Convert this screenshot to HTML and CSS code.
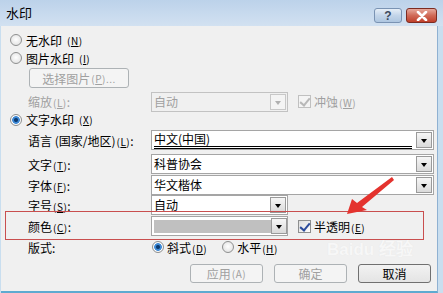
FILE: index.html
```html
<!DOCTYPE html>
<html lang="zh-CN">
<head>
    <meta charset="UTF-8" />
    <title>水印</title>
    <link rel="stylesheet" href="styles.css">
</head>
<body>
<div class="window">
    <div class="titlebar">
        <span class="title">水印</span>
        <div class="caption-btns">
            <span class="cap help">?</span>
            <span class="cap close">
                <svg width="14" height="10" viewBox="0 0 14 10"><path d="M3 1 L11 9 M11 1 L3 9" stroke="#fff" stroke-width="2.6" stroke-linecap="round"/></svg>
            </span>
        </div>
    </div>
    <div class="client">
        <div class="opt first"><span class="radio"></span>无水印<span class="key">(<u>N</u>)</span></div>
        <div class="opt"><span class="radio"></span>图片水印<span class="key">(<u>I</u>)</span></div>
        <div class="pick-row"><span class="btn pick disabled">选择图片<span class="key">(<u>P</u>)...</span></span></div>
        <div class="field scale disabled">
            <span class="lbl">缩放<span class="key">(<u>L</u>)</span>:</span>
            <span class="combo short off"><span class="val">自动</span><span class="drop"></span></span>
            <span class="check off"></span><span class="check-text">冲蚀<span class="key">(<u>W</u>)</span></span>
        </div>
        <div class="opt text-opt"><span class="radio on"></span>文字水印<span class="key">(<u>X</u>)</span></div>
        <div class="field lang">
            <span class="lbl">语言 (国家/地区)<span class="key">(<u>L</u>)</span>:</span>
            <span class="combo long"><span class="val underlined">中文(中国)</span><span class="drop"></span></span>
        </div>
        <div class="field gap4">
            <span class="lbl">文字<span class="key">(<u>T</u>)</span>:</span>
            <span class="combo long"><span class="val">科普协会</span><span class="drop"></span></span>
        </div>
        <div class="field gap1">
            <span class="lbl">字体<span class="key">(<u>F</u>)</span>:</span>
            <span class="combo long"><span class="val">华文楷体</span><span class="drop"></span></span>
        </div>
        <div class="field">
            <span class="lbl">字号<span class="key">(<u>S</u>)</span>:</span>
            <span class="combo short"><span class="val">自动</span><span class="drop"></span></span>
        </div>
        <div class="field gap1">
            <span class="lbl">颜色<span class="key">(<u>C</u>)</span>:</span>
            <span class="combo short"><span class="val"><span class="swatch"></span></span><span class="drop"></span></span>
            <span class="check on"></span><span class="check-text">半透明<span class="key">(<u>E</u>)</span></span>
        </div>
        <div class="field layout">
            <span class="lbl">版式:</span>
            <span class="radio on"></span><span class="radio-text">斜式<span class="key">(<u>D</u>)</span></span>
            <span class="radio"></span><span class="radio-text">水平<span class="key">(<u>H</u>)</span></span>
        </div>
        <div class="actions">
            <span class="btn disabled">应用<span class="key">(A)</span></span>
            <span class="btn disabled">确定</span>
            <span class="btn default">取消</span>
        </div>

        <div class="watermark">Bai<b>du</b> 经验</div>
        <div class="highlight"></div>
        <svg class="arrow" width="443" height="293" viewBox="0 0 443 293">
            <polygon points="347,214 352,199 357,203 392,177 394,180 362,207 367,210" fill="#e4332e"/>
        </svg>
    </div>
</div>
</body>
</html>
```

FILE: styles.css
```css
* {
    box-sizing: border-box;
}
body {
    margin: 0;
    width: 443px;
    height: 293px;
    overflow: hidden;
    font-family: "Noto Sans CJK SC", "Liberation Sans", sans-serif;
    font-size: 12px;
    color: #000;
}
.window {
    width: 443px;
    height: 293px;
    display: flex;
    flex-direction: column;
    background: #c9deef;
}
.titlebar {
    height: 26px;
    display: flex;
    justify-content: space-between;
    padding: 0 6px 0 6px;
    background: linear-gradient(#bcd2ea, #d2e1f1);
}
.title {
    font-size: 13px;
    line-height: 26px;
}
.caption-btns {
    display: flex;
    gap: 4px;
    padding-top: 8px;
}
.cap {
    height: 15px;
    border-radius: 3px;
    display: flex;
    align-items: center;
    justify-content: center;
}
.help {
    width: 28px;
    border: 1px solid #7a93b3;
    background: linear-gradient(#e6eef7, #c3d5e9 50%, #aec6e0);
    color: #3c4a5e;
    font-family: "Liberation Sans", sans-serif;
    font-weight: bold;
    font-size: 12px;
}
.close {
    width: 31px;
    border: 1px solid #7c2c22;
    background: linear-gradient(#e7a99c, #d06a57 50%, #c0402b);
}
.client {
    position: relative;
    flex: 1;
    margin: 0 5px 0 1px;
    background: #f0f0f0;
    border-right: 1px solid #8fb1d2;
    border-bottom: 2px solid #5eaad0;
    padding-left: 9px;
}
.key {
    font-size: 10px;
    margin-left: 1px;
    letter-spacing: 0.5px;
}
.opt {
    height: 18px;
    display: flex;
    align-items: center;
    gap: 4px;
}
.opt.first {
    margin-top: 5px;
}
.text-opt {
    height: 17px;
}
.radio {
    width: 12px;
    height: 12px;
    border-radius: 50%;
    border: 1px solid #8e8f8f;
    background: radial-gradient(circle at 50% 45%, #ffffff, #dcdcdc);
    flex: none;
}
.radio.on {
    background: radial-gradient(circle, #0b3a70 0 1.5px, #3f8ad6 2.5px 3.5px, #fff 4.2px, #dcdcdc);
}
.pick-row {
    margin: 1px 0 0 19px;
    height: 20px;
}
.btn {
    display: inline-flex;
    align-items: center;
    justify-content: center;
    height: 20px;
    border-radius: 3px;
    border: 1px solid #adb2b5;
    background: #f4f4f4;
}
.btn.disabled {
    color: #a0a0a0;
}
.pick {
    width: 100px;
}
.field {
    display: flex;
    align-items: center;
    height: 20px;
    padding-left: 18px;
}
.field .lbl {
    width: 123px;
    flex: none;
}
.scale {
    margin-top: 4px;
    height: 19px;
}
.disabled .lbl, .scale .check-text {
    color: #a0a0a0;
}
.lang {
    margin-top: 2px;
}
.gap4 {
    margin-top: 4px;
}
.gap1 {
    margin-top: 1px;
}
.combo {
    height: 20px;
    display: flex;
    align-items: center;
    justify-content: space-between;
    border: 1px solid #a5a5a5;
    background: #fff;
    padding: 0 1px 0 2px;
    flex: none;
}
.combo.short {
    width: 137px;
}
.combo.long {
    width: 283px;
}
.combo.off {
    border-color: #c2c2c2;
    background: #f0f0f0;
    color: #a0a0a0;
}
.val {
    flex: 1;
    line-height: 16px;
}
.underlined {
    border-bottom: 3px double #000;
    margin-right: 4px;
    line-height: 14px;
}
.swatch {
    display: block;
    width: 117px;
    height: 13px;
    background: #c0c0c0;
}
.drop {
    width: 16px;
    height: 16px;
    border: 1px solid #9a9a9a;
    background: linear-gradient(#f6f6f6, #dadada);
    position: relative;
    flex: none;
}
.drop::after {
    content: "";
    position: absolute;
    left: 4px;
    top: 6px;
    border-left: 3.5px solid transparent;
    border-right: 3.5px solid transparent;
    border-top: 4px solid #000;
}
.off .drop {
    border-color: #c8c8c8;
    background: #f4f4f4;
}
.off .drop::after {
    border-top-color: #b0b0b0;
}
.check {
    width: 13px;
    height: 13px;
    margin-left: 10px;
    border: 1px solid #8e8f8f;
    background: linear-gradient(135deg, #dcdcdc, #fff);
    position: relative;
    flex: none;
}
.check::after {
    content: "";
    position: absolute;
    left: 3px;
    top: 0px;
    width: 4px;
    height: 8px;
    border-right: 2px solid #2b4b9b;
    border-bottom: 2px solid #2b4b9b;
    transform: rotate(40deg);
}
.check.off {
    border-color: #c0c0c0;
    background: #f4f4f4;
}
.check.off::after {
    border-color: #b8b8b8;
}
.check-text {
    margin-left: 3px;
}
.layout {
    margin-top: 2px;
    height: 18px;
}
.layout .radio {
    margin-left: 1px;
}
.radio-text {
    margin: 0 14px 0 3px;
}
.actions {
    display: flex;
    justify-content: flex-end;
    gap: 11px;
    margin: 8px 6px 0 0;
}
.actions .btn {
    width: 73px;
    height: 19px;
}
.btn.default {
    border-color: #707070;
    background: linear-gradient(#f2f2f2, #e4e4e4);
}
.watermark {
    position: absolute;
    left: 326px;
    top: 214px;
    font-family: "Liberation Sans", sans-serif;
    font-size: 17px;
    line-height: 20px;
    font-weight: bold;
    color: #f7f7f7;
    text-shadow: 0 0 1px #e4e4e4;
}
.highlight {
    position: absolute;
    left: 4px;
    top: 185px;
    width: 419px;
    height: 29px;
    border: 1px solid #c94f4f;
}
.arrow {
    position: absolute;
    left: -1px;
    top: -26px;
}
```
